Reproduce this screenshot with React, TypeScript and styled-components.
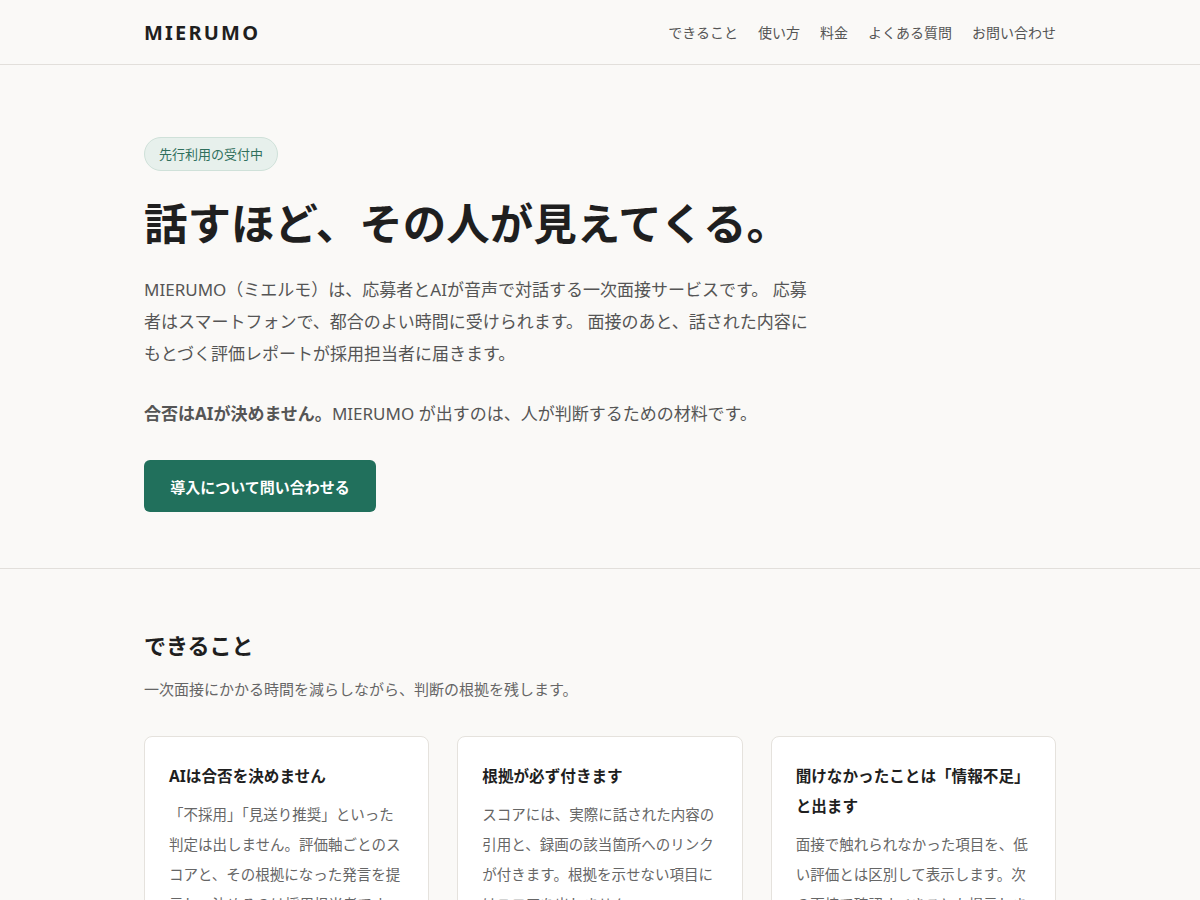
import * as React from 'react';
import styled, { createGlobalStyle } from 'styled-components';

const GlobalStyle = createGlobalStyle`
  body {
    margin: 0;
    background: #faf9f7;
    color: #1f1f1f;
    font-family: "Noto Sans", "Noto Sans CJK JP", sans-serif;
  }
`;

const navItems = ['できること', '使い方', '料金', 'よくある質問', 'お問い合わせ'];

const features = [
  {
    title: 'AIは合否を決めません',
    body: '「不採用」「見送り推奨」といった判定は出しません。評価軸ごとのスコアと、その根拠になった発言を提示し、決めるのは採用担当者です。',
  },
  {
    title: '根拠が必ず付きます',
    body: 'スコアには、実際に話された内容の引用と、録画の該当箇所へのリンクが付きます。根拠を示せない項目にはスコアを出しません。',
  },
  {
    title: '聞けなかったことは「情報不足」と出ます',
    body: '面接で触れられなかった項目を、低い評価とは区別して表示します。次の面接で確認すべきことも提示します。',
  },
];

const App: React.FC = () => {
  return (
    <>
      <GlobalStyle />
      <Header>
        <Inner>
          <HeaderRow>
            <Logo>MIERUMO</Logo>
            <Nav>
              {navItems.map((item) => (
                <NavLink key={item} href='#'>
                  {item}
                </NavLink>
              ))}
            </Nav>
          </HeaderRow>
        </Inner>
      </Header>

      <Hero>
        <Inner>
          <BadgeRow>
            <Badge>先行利用の受付中</Badge>
          </BadgeRow>
          <Title>話すほど、その人が見えてくる。</Title>
          <Lead>
            MIERUMO（ミエルモ）は、応募者とAIが音声で対話する一次面接サービスです。
            応募者はスマートフォンで、都合のよい時間に受けられます。
            面接のあと、話された内容にもとづく評価レポートが採用担当者に届きます。
          </Lead>
          <Note>
            <strong>合否はAIが決めません。</strong>MIERUMO が出すのは、人が判断するための材料です。
          </Note>
          <CtaButton href='#'>導入について問い合わせる</CtaButton>
        </Inner>
      </Hero>

      <Section>
        <Inner>
          <SectionTitle>できること</SectionTitle>
          <SectionLead>一次面接にかかる時間を減らしながら、判断の根拠を残します。</SectionLead>
          <CardGrid>
            {features.map((f) => (
              <Card key={f.title}>
                <CardTitle>{f.title}</CardTitle>
                <CardBody>{f.body}</CardBody>
              </Card>
            ))}
          </CardGrid>
        </Inner>
      </Section>
    </>
  );
};

export default App;

const Inner = styled.div`
  width: 912px;
  margin: 0 auto;
`;

const Header = styled.header`
  border-bottom: 1px solid #e2dfdb;
`;

const HeaderRow = styled.div`
  height: 64px;
  display: flex;
  align-items: center;
  justify-content: space-between;
`;

const Logo = styled.div`
  font-size: 20px;
  font-weight: 700;
  letter-spacing: 2.2px;
  color: #1f1f1f;
`;

const Nav = styled.nav`
  display: flex;
  gap: 20px;
`;

const NavLink = styled.a`
  font-size: 14px;
  color: #555;
  text-decoration: none;
`;

const Hero = styled.section`
  padding: 72px 0 56px;
  border-bottom: 1px solid #e2dfdb;
`;

const BadgeRow = styled.div`
  display: flex;
`;

const Badge = styled.span`
  padding: 6px 14px;
  font-size: 13px;
  line-height: 20px;
  color: #2f6f5c;
  background: #e7f0ec;
  border: 1px solid #cfe1d9;
  border-radius: 999px;
`;

const Title = styled.h1`
  margin: 24px 0 23px;
  font-size: 43.5px;
  line-height: 56px;
  font-weight: 700;
  color: #1f1f1f;
`;

const Lead = styled.p`
  margin: 0;
  max-width: 672px;
  font-size: 17px;
  line-height: 32px;
  color: #555;
`;

const Note = styled.p`
  margin: 28px 0 30px;
  font-size: 17px;
  line-height: 32px;
  color: #555;

  strong {
    font-weight: 700;
  }
`;

const CtaButton = styled.a`
  display: flex;
  align-items: center;
  justify-content: center;
  width: 232px;
  height: 52px;
  border-radius: 6px;
  background: #21705c;
  color: #fff;
  font-size: 15px;
  font-weight: 700;
  text-decoration: none;
`;

const Section = styled.section`
  padding: 59px 0 80px;
`;

const SectionTitle = styled.h2`
  margin: 0 0 13px;
  font-size: 22px;
  line-height: 34px;
  font-weight: 700;
`;

const SectionLead = styled.p`
  margin: 0 0 33px;
  font-size: 15px;
  line-height: 28px;
  color: #666;
`;

const CardGrid = styled.div`
  display: grid;
  grid-template-columns: repeat(3, 1fr);
  gap: 28px;
`;

const Card = styled.div`
  background: #fff;
  border: 1px solid #e5e2dd;
  border-radius: 8px;
  padding: 24px 24px 28px;
`;

const CardTitle = styled.h3`
  margin: 0 0 8px;
  font-size: 15.6px;
  line-height: 30px;
  font-weight: 700;
  color: #1f1f1f;
`;

const CardBody = styled.p`
  margin: 0;
  font-size: 14.5px;
  line-height: 30px;
  color: #666;
`;
